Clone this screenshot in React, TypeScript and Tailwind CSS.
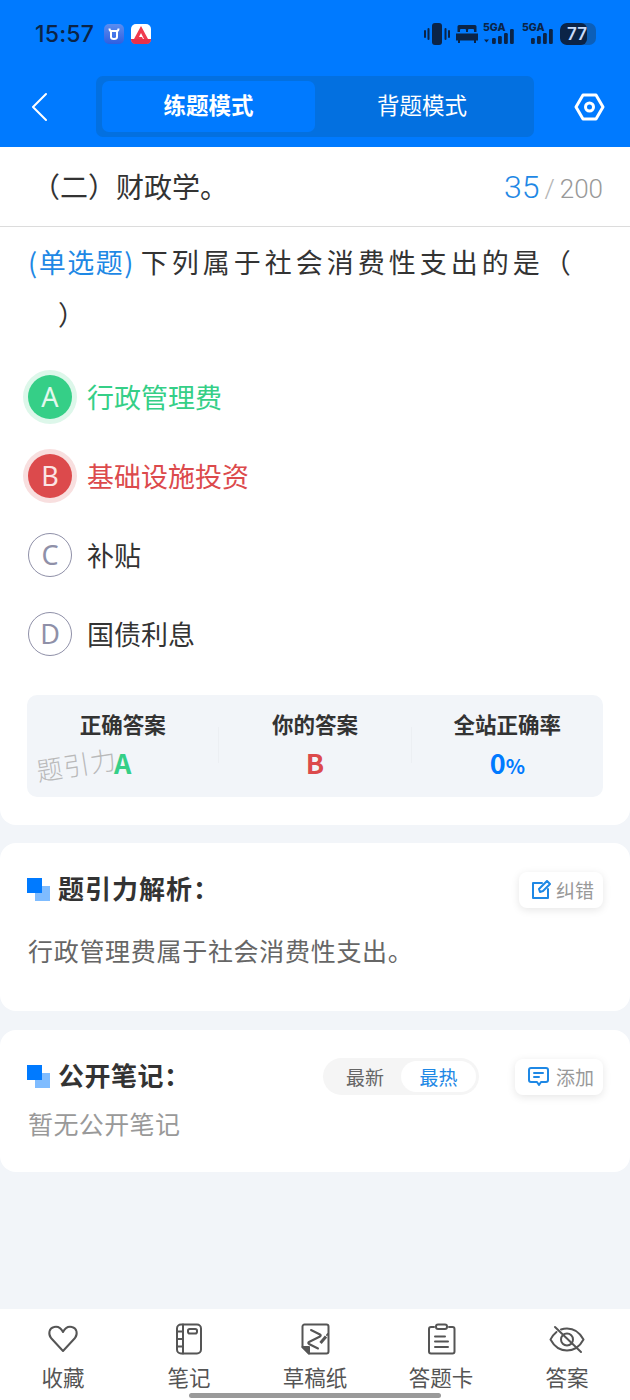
const FONT = "font-['Noto_Sans_CJK_SC','Noto_Sans',sans-serif]";

function SignalBars({ arrow }: { arrow?: boolean }) {
  return (
    <svg width="32" height="26" viewBox="0 0 32 26" fill="#0b2447">
      <text x="0" y="10" fontSize="10.500" fontWeight="800" fontFamily="Inter, sans-serif">5GA</text>
      {arrow && <path d="M1 18.500h5l-2.500 3z" />}
      <rect x="9" y="17" width="3.800" height="6" rx="1.300" />
      <rect x="15" y="15" width="3.800" height="8" rx="1.300" />
      <rect x="21" y="12" width="3.800" height="11" rx="1.300" />
      <rect x="27" y="8" width="3.800" height="15" rx="1.300" />
    </svg>
  );
}

function StatusBar() {
  return (
    <div className="flex h-[68px] items-center pl-[35px] pr-[34px]">
      <span className="text-[23px] font-medium leading-none text-[#0b2447] font-['Inter',sans-serif] tracking-[0.2px]">15:57</span>
      <div className="ml-[10px] flex items-center gap-[7px]">
        <svg width="20" height="20" viewBox="0 0 20 20">
          <defs>
            <linearGradient id="cow" x1="0" y1="0" x2="0" y2="1">
              <stop offset="0" stopColor="#5b8df0" />
              <stop offset="1" stopColor="#2f5fe0" />
            </linearGradient>
          </defs>
          <rect width="20" height="20" rx="5" fill="url(#cow)" />
          <path d="M5.500 4.500c0 2 1 2.500 2 2.500h5c1 0 2-.5 2-2.500M7 7v6c0 2.500 6 2.500 6 0V7" fill="none" stroke="#fff" strokeWidth="2" />
        </svg>
        <svg width="20" height="20" viewBox="0 0 20 20">
          <rect width="20" height="20" rx="5" fill="#fff" />
          <path d="M10 2 17 15h-4l-3-6-2 4h3l1 2H3z" fill="#ef3a4d" />
          <path d="M0 15h20v1c0 2-2 4-4 4H4c-2 0-4-2-4-4z" fill="#e8304a" />
        </svg>
      </div>
      <div className="ml-auto flex items-center">
        <svg width="26" height="22" viewBox="0 0 26 22" fill="#0b2447">
          <rect x="8" y="0" width="10" height="22" rx="3" />
          <rect x="0" y="7" width="2" height="8" rx="1" />
          <rect x="3.500" y="5" width="2" height="12" rx="1" />
          <rect x="20.500" y="5" width="2" height="12" rx="1" />
          <rect x="24" y="7" width="2" height="8" rx="1" />
        </svg>
        <svg className="ml-[6px]" width="22" height="18" viewBox="0 0 22 18" fill="#0b2447">
          <path d="M3 0h16a1.500 1.500 0 0 1 1.500 1.500V7H18V5a1 1 0 0 0-1-1h-4a1 1 0 0 0-1 1v2h-2V5a1 1 0 0 0-1-1H5a1 1 0 0 0-1 1v2H1.500V1.500A1.500 1.500 0 0 1 3 0z" />
          <path d="M0 8.500h22v7h-2V18h-2v-2.500H4V18H2v-2.500H0z" />
        </svg>
        <div className="ml-[5px]"><SignalBars arrow /></div>
        <div className="ml-[7px]"><SignalBars /></div>
        <div className="ml-[6px] flex h-[22px] w-[36px] overflow-hidden rounded-[7px] bg-[#0c5fb8]">
          <div className="flex h-full w-[27px] items-center justify-end rounded-[6px] bg-[#0b2447] text-[17px] font-semibold leading-none text-[#c9dcfb] font-['Inter',sans-serif]">77</div>
        </div>
      </div>
    </div>
  );
}

function NavBar() {
  return (
    <div className="flex h-[79px] items-start">
      <div className="flex w-[96px] justify-start pl-[31px] pt-[24px]">
        <svg width="16" height="30" viewBox="0 0 16 30" fill="none" stroke="#fff" strokeWidth="2" strokeLinecap="round" strokeLinejoin="round">
          <path d="M15 2 2 15l13 13" />
        </svg>
      </div>
      <div className="mt-[8px] flex h-[61px] w-[438px] rounded-[7px] bg-[#0370e0] py-[5px] pl-[6px] pr-[5px]">
        <div className="flex h-[51px] w-[213px] items-center justify-center rounded-[7px] bg-[#007aff] pb-[3px] text-[22.500px] font-bold text-white">练题模式</div>
        <div className="flex h-[51px] flex-1 items-center justify-center pb-[3px] text-[22.500px] text-white">背题模式</div>
      </div>
      <div className="flex flex-1 justify-end pr-[25px] pt-[25px]">
        <svg width="31" height="28" viewBox="0 0 31 28" fill="none" stroke="#fff" strokeWidth="3" strokeLinejoin="round">
          <path d="M9 2h13l7 12-7 12H9L2 14z" />
          <circle cx="15.500" cy="14" r="4" />
        </svg>
      </div>
    </div>
  );
}

function Option({ letter, text, state }: { letter: string; text: string; state?: "right" | "wrong" }) {
  const color = state === "right" ? "text-[#35cf87]" : state === "wrong" ? "text-[#dc4a4c]" : "text-[#333333]";
  let badge = "border-[1.500px] border-[#8f90a8] text-[#8f90a8]";
  if (state === "right") badge = "bg-[#35cf87] text-[#e3f8ee] shadow-[0_0_0_5px_#ddf7ea]";
  if (state === "wrong") badge = "bg-[#dc4a4c] text-[#fbe4e4] shadow-[0_0_0_5px_#f8dfdf]";
  return (
    <div className="flex h-[79px] items-center">
      <div className={`ml-px flex h-[44px] w-[44px] items-center justify-center rounded-full text-[27px] font-['Noto_Sans',sans-serif] font-normal leading-none ${badge}`}>
        {letter}
      </div>
      <span className={`ml-[15px] text-[27px] leading-none ${color}`}>{text}</span>
    </div>
  );
}

function Stat({ title, children }: { title: string; children: React.ReactNode }) {
  return (
    <div className="flex flex-1 flex-col items-center">
      <div className="mt-[16px] text-[21.500px] font-bold leading-[26px] text-[#333333]">{title}</div>
      <div className="mt-[10px] flex h-[30px] items-center text-[27px] font-bold leading-none">{children}</div>
    </div>
  );
}

function HeadMark() {
  return (
    <div className="relative h-[23px] w-[23px] shrink-0">
      <div className="absolute bottom-0 right-0 h-[15px] w-[15px] bg-[#7fbcff]" />
      <div className="absolute left-0 top-0 h-[15px] w-[15px] bg-[#007aff]" />
    </div>
  );
}

function Card({ className, children }: { className: string; children: React.ReactNode }) {
  return <div className={`rounded-[16px] bg-white px-[27px] ${className}`}>{children}</div>;
}

const tabStroke = { fill: "none", stroke: "#555555", strokeWidth: 2, strokeLinecap: "round", strokeLinejoin: "round" } as const;

const TABS = [
  {
    label: "收藏",
    icon: (
      <svg width="32" height="32" viewBox="0 0 32 32" {...tabStroke}>
        <path d="M16 28 4 15C1 11 2 5 7 4c4-1 7 1 9 5 2-4 5-6 9-5 5 1 6 7 3 11z" />
      </svg>
    ),
  },
  {
    label: "笔记",
    icon: (
      <svg width="32" height="32" viewBox="0 0 32 32" {...tabStroke}>
        <rect x="4" y="1.500" width="24" height="29" rx="4" />
        <path d="M10 1.500v29M4 8.500h6M4 16h6M4 23.500h6" />
        <rect x="15" y="6" width="9" height="4.500" rx="1.800" />
      </svg>
    ),
  },
  {
    label: "草稿纸",
    icon: (
      <svg width="32" height="32" viewBox="0 0 32 32" {...tabStroke}>
        <path d="M3.500 24V3.500a2 2 0 0 1 2-2h22a2 2 0 0 1 2 2v25a2 2 0 0 1-2 2H10z" />
        <path d="M3.500 24H10v6.500z" fill="#555555" />
        <path d="m12 7 9 4.500c1 .5 1 1.500 0 2L10 19c-1 .5-1 1.500 0 2l9 4.500" />
        <path d="m21.500 20 5.500-6.500" strokeWidth="3" strokeLinecap="butt" />
        <path d="m28 12 .8-1" />
      </svg>
    ),
  },
  {
    label: "答题卡",
    icon: (
      <svg width="32" height="32" viewBox="0 0 32 32" {...tabStroke}>
        <path d="M9 4H6a2 2 0 0 0-2 2v22.500a2 2 0 0 0 2 2h21.500a2 2 0 0 0 2-2V6a2 2 0 0 0-2-2H24" />
        <rect x="11" y="1.500" width="11" height="4.500" rx="2" />
        <path d="M10 13.500h10M10 18.500h13M10 24h13" />
      </svg>
    ),
  },
  {
    label: "答案",
    icon: (
      <svg width="36" height="32" viewBox="0 0 36 32" {...tabStroke}>
        <path d="M7.500 9c-3 2.500-5 5-6 7.500C5 23 11 27.500 18 27.500S31 23 34.500 16.500C31 10 25 5.500 18 5.500c-2 0-4 .3-6 1" />
        <circle cx="18" cy="16.500" r="6" />
        <path d="m6 4 26 25" />
      </svg>
    ),
  },
];

export default function App() {
  return (
    <div className={`relative flex h-[1400px] w-[630px] flex-col overflow-hidden bg-[#f2f5f9] ${FONT}`}>
      <header className="bg-[#007aff]">
        <StatusBar />
        <NavBar />
      </header>

      <main className="flex-1">
        <div className="rounded-b-[16px] bg-white">
          <div className="flex h-[80px] items-center justify-between border-b border-[#dcdcdc] pl-[32px] pr-[27px]">
            <span className="pb-[2px] text-[28px] leading-none text-[#333333]">（二）财政学。</span>
            <div className="flex items-baseline font-['Roboto',sans-serif] font-light">
              <span className="text-[32px] leading-none text-[#1e88e5]">35</span>
              <span className="ml-[5px] text-[26px] leading-none text-[#b5b5b5]">/</span>
              <span className="ml-[5px] text-[26px] leading-none text-[#999999]">200</span>
            </div>
          </div>

          <div className="px-[27px]">
            <p className="pl-px pt-[9px] text-[27px] leading-[52px] tracking-[4px] text-[#333333]">
              <span className="mr-[6px] tracking-[1.500px] text-[#1e88e5]">(单选题)</span>下列属于社会消费性支出的是（
              <br />
              <span className="ml-[30px]">）</span>
            </p>
            <div className="mt-[17px]">
              <Option letter="A" text="行政管理费" state="right" />
              <Option letter="B" text="基础设施投资" state="wrong" />
              <Option letter="C" text="补贴" />
              <Option letter="D" text="国债利息" />
            </div>

            <div className="relative mt-[22px] flex h-[102px] rounded-[10px] bg-[#f2f5f9]">
              <Stat title="正确答案"><span className="text-[#35cf87]">A</span></Stat>
              <div className="mt-[32px] h-[36px] w-px bg-[#eceff3]" />
              <Stat title="你的答案"><span className="text-[#dc4a4c]">B</span></Stat>
              <div className="mt-[32px] h-[36px] w-px bg-[#eceff3]" />
              <Stat title="全站正确率">
                <span className="text-[#007aff]">0<span className="text-[20px]">%</span></span>
              </Stat>
              <span className="absolute left-[9px] top-[56px] -rotate-[9deg] text-[26px] font-light leading-none tracking-[1px] text-[#b9b9b9]">题引力</span>
            </div>
            <div className="h-[28px]" />
          </div>
        </div>

        <Card className="mt-[18px] h-[168px]">
          <div className="flex items-center pt-[27px]">
            <HeadMark />
            <span className="ml-[8px] pb-[3px] text-[26px] font-bold leading-[36px] tracking-[1px] text-[#333333]">题引力解析：</span>
            <div className="ml-auto flex h-[36px] w-[84px] items-center justify-center gap-[5px] rounded-[8px] bg-white pl-[3px] shadow-[0_2px_8px_rgba(0,0,0,0.1)]">
              <svg width="20" height="20" viewBox="0 0 20 20" fill="none" stroke="#1e88e5" strokeWidth="2" strokeLinecap="round" strokeLinejoin="round">
                <path d="M11 3H2v15h15V9" />
                <path d="m8 9 1 3 3-1 7-7-3-3z" />
              </svg>
              <span className="text-[19px] leading-none text-[#999999]">纠错</span>
            </div>
          </div>
          <p className="ml-px mt-[23px] text-[25px] leading-[36px] tracking-[0.7px] text-[#666666]">行政管理费属于社会消费性支出。</p>
        </Card>

        <Card className="mt-[19px] h-[142px]">
          <div className="flex items-center pt-[27px]">
            <HeadMark />
            <span className="ml-[8px] pb-[3px] text-[26px] font-bold leading-[36px] tracking-[0.5px] text-[#333333]">公开笔记：</span>
            <div className="ml-auto flex h-[37px] w-[156px] items-center rounded-full bg-[#f5f5f5] p-[3px]">
              <span className="flex-1 pl-[3px] text-center text-[19px] leading-none text-[#666666]">最新</span>
              <span className="flex h-[31px] w-[75px] items-center justify-center rounded-full bg-white text-[19px] leading-none text-[#1e88e5]">最热</span>
            </div>
            <div className="ml-[36px] flex h-[36px] w-[88px] items-center justify-center gap-[7px] rounded-[8px] bg-white pl-[4px] shadow-[0_2px_8px_rgba(0,0,0,0.1)]">
              <svg width="21" height="19" viewBox="0 0 21 19" fill="none" stroke="#1e88e5" strokeWidth="2" strokeLinejoin="round" strokeLinecap="round">
                <path d="M3 1h15a2 2 0 0 1 2 2v10a2 2 0 0 1-2 2h-5l-2 3-2-3H3a2 2 0 0 1-2-2V3a2 2 0 0 1 2-2z" />
                <path d="M6 6h9M6 10h5" />
              </svg>
              <span className="text-[19px] leading-none text-[#999999]">添加</span>
            </div>
          </div>
          <p className="ml-px mt-[9px] text-[25px] leading-[36px] tracking-[0.4px] text-[#999999]">暂无公开笔记</p>
        </Card>
      </main>

      <nav className="flex h-[91px] justify-around bg-white">
        {TABS.map((tab) => (
          <div key={tab.label} className="flex w-[126px] flex-col items-center pt-[14px]">
            {tab.icon}
            <span className="mt-[9px] text-[21.500px] leading-[26px] text-[#555555]">{tab.label}</span>
          </div>
        ))}
      </nav>
      <div className="absolute bottom-[2px] left-[189px] h-[5px] w-[252px] rounded-full bg-[#9a9a9a]" />
    </div>
  );
}
